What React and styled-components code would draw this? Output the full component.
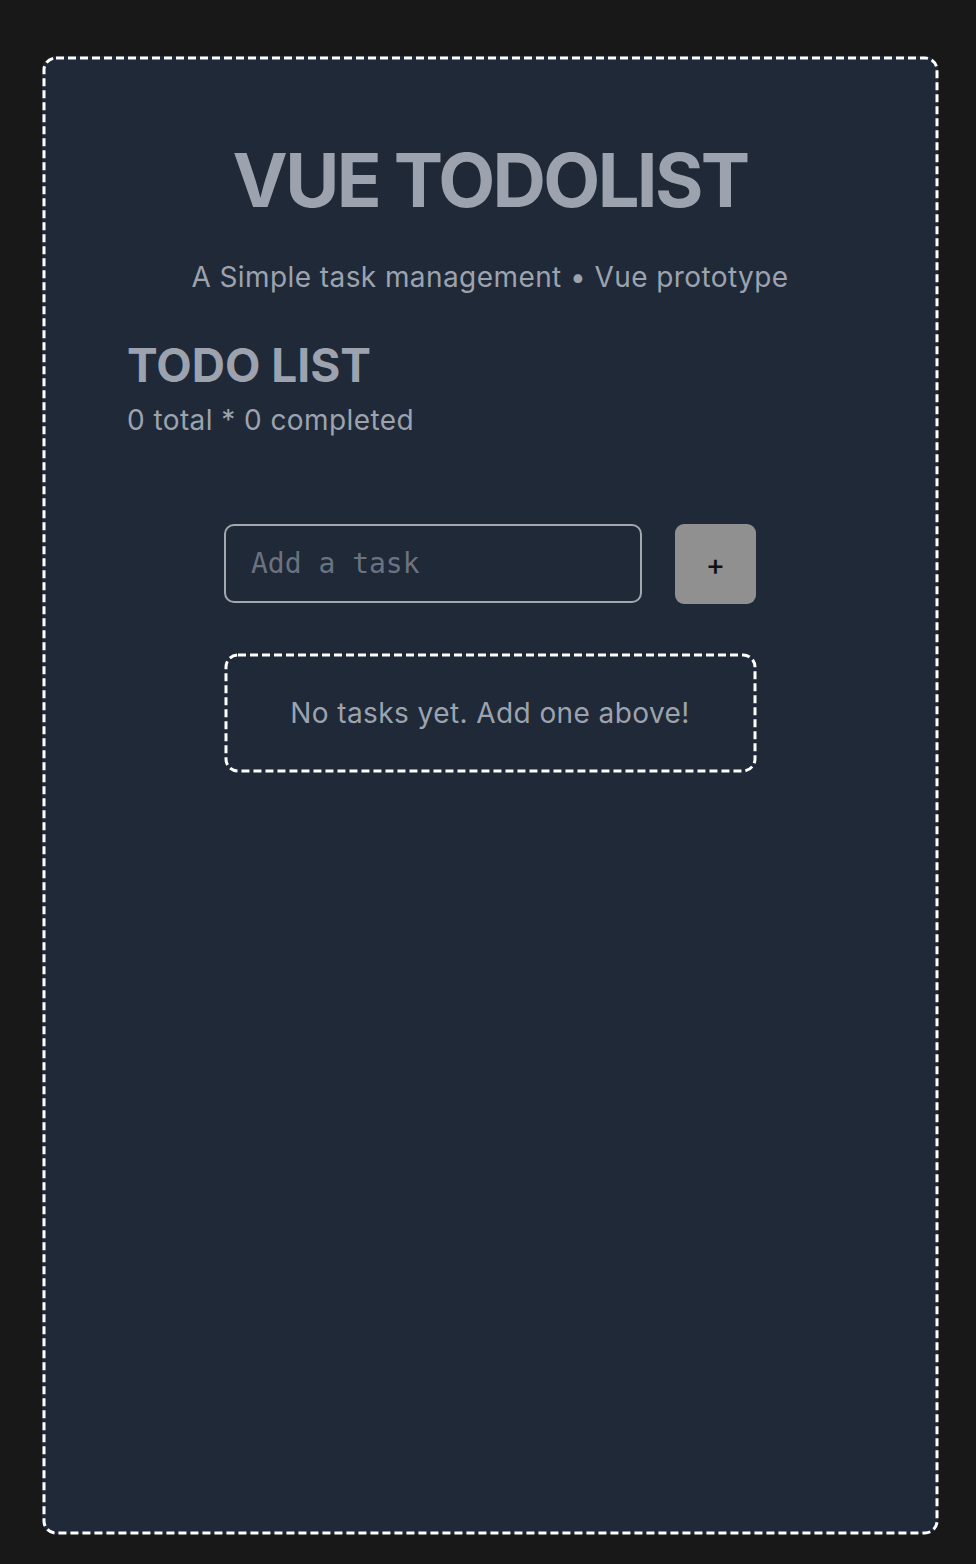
import { useState } from 'react'
import styled, { createGlobalStyle } from 'styled-components'

const GlobalStyle = createGlobalStyle`
  html, body {
    margin: 0;
    padding: 0;
    background: #181818;
    font-family: Inter, 'Noto Sans', sans-serif;
  }
  * { box-sizing: border-box; }
`

// dashed outline drawn as svg so the dash rhythm (8 on / 4 off) matches
const DashedFrame = ({ radius }) => (
  <Frame>
    <rect width='100%' height='100%' rx={radius} ry={radius} />
  </Frame>
)

const App = () => {
  const [tasks, setTasks] = useState([])
  const [text, setText] = useState('')

  const addTask = (event) => {
    event.preventDefault()
    if (!text.trim()) return
    setTasks([...tasks, { id: Date.now(), text, done: false }])
    setText('')
  }

  const completed = tasks.filter((t) => t.done).length

  return (
    <Page>
      <GlobalStyle />
      <Card>
        <DashedFrame radius={12} />
        <Title>VUE TODOLIST</Title>
        <Subtitle>A Simple task management • Vue prototype</Subtitle>
        <Section>
          <SectionTitle>TODO LIST</SectionTitle>
          <Stats>
            {tasks.length} total * {completed} completed
          </Stats>
        </Section>
        <Content>
          <AddRow onSubmit={addTask}>
            <TaskInput
              placeholder='Add a task'
              value={text}
              onChange={(e) => setText(e.target.value)}
            />
            <AddButton type='submit'>+</AddButton>
          </AddRow>
          {tasks.length === 0 ? (
            <Empty>
              <DashedFrame radius={12} />
              No tasks yet. Add one above!
            </Empty>
          ) : (
            tasks.map((t) => (
              <Empty key={t.id}>
                <DashedFrame radius={12} />
                {t.text}
              </Empty>
            ))
          )}
        </Content>
      </Card>
    </Page>
  )
}

const Page = styled.div`
  padding: 56px 38px 30px 42px;
  min-height: 100vh;
`

const Frame = styled.svg`
  position: absolute;
  top: 1.5px;
  left: 1.5px;
  width: calc(100% - 3px);
  height: calc(100% - 3px);
  overflow: visible;
  pointer-events: none;
  rect {
    fill: none;
    stroke: #ffffff;
    stroke-width: 3;
    stroke-dasharray: 8 4;
  }
`

const Card = styled.div`
  position: relative;
  min-height: 1478px;
  background: #1f2937;
  border-radius: 14px;
  padding: 87px 85px 40px;
  color: #9ca3af;
  display: flex;
  flex-direction: column;
`

const Title = styled.h1`
  margin: 0;
  text-align: center;
  font-size: 74px;
  line-height: 74px;
  font-weight: 700;
  letter-spacing: -0.036em;
  color: #9ca3af;
`

const Subtitle = styled.p`
  margin: 42px 0 0;
  text-align: center;
  font-size: 28px;
  line-height: 36px;
  letter-spacing: 0.015em;
  color: #9ca3af;
`

const Section = styled.div`
  margin-top: 45px;
`

const SectionTitle = styled.h2`
  margin: 0;
  font-size: 46px;
  line-height: 50px;
  font-weight: 700;
  letter-spacing: 0;
`

const Stats = styled.p`
  margin: 12px 0 0;
  font-size: 28px;
  line-height: 36px;
  letter-spacing: 0.015em;
`

const Content = styled.div`
  width: 532px;
  margin: 86px auto 0;
  display: flex;
  flex-direction: column;
  gap: 49px;
`

const AddRow = styled.form`
  display: flex;
  gap: 33px;
`

const TaskInput = styled.input`
  flex: 1;
  height: 79px;
  background: transparent;
  border: 2px solid #a3a8b0;
  border-radius: 10px;
  padding: 0 25px;
  font-family: 'DejaVu Sans Mono', 'Liberation Mono', monospace;
  font-size: 28px;
  color: #d1d5db;
  outline: none;
  &::placeholder {
    color: #6b7280;
  }
`

const AddButton = styled.button`
  width: 81px;
  height: 80px;
  border: none;
  border-radius: 9px;
  background: #909090;
  color: #111111;
  font-family: Inter, sans-serif;
  font-size: 29px;
  font-weight: 500;
  cursor: pointer;
`

const Empty = styled.div`
  position: relative;
  height: 119px;
  border-radius: 14px;
  display: flex;
  align-items: center;
  justify-content: center;
  font-size: 28px;
  letter-spacing: 0.015em;
  color: #9ca3af;
`

export default App
